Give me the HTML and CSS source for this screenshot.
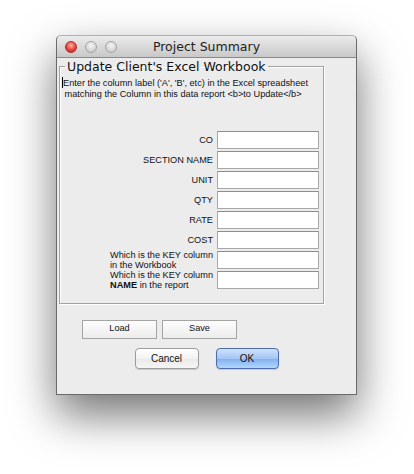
FILE: index.html
```html
<!DOCTYPE html>
<html lang="en">
  <head>
    <meta charset="UTF-8" />
    <meta name="viewport" content="width=device-width, initial-scale=1.0" />
    <title>Project Summary</title>
    <link rel="stylesheet" href="styles.css">
  </head>
  <body>
    <div class="window">
      <div class="titlebar">
        <div class="lights">
          <span class="light red"></span>
          <span class="light"></span>
          <span class="light"></span>
        </div>
        <div class="title">Project Summary</div>
        <div></div>
      </div>

      <div class="content">
        <fieldset class="group">
          <legend>Update Client's Excel Workbook</legend>
          <p class="intro"><span class="caret"></span>Enter the column label ('A', 'B', etc) in the Excel spreadsheet<br> matching the Column in this data report &lt;b&gt;to Update&lt;/b&gt;</p>

          <div class="fields">
            <label>CO</label><input type="text">
            <label>SECTION NAME</label><input type="text">
            <label>UNIT</label><input type="text">
            <label>QTY</label><input type="text">
            <label>RATE</label><input type="text">
            <label>COST</label><input type="text">
            <label class="multi">Which is the KEY column<br>in the Workbook</label><input type="text">
            <label class="multi">Which is the KEY column<br><b>NAME</b> in the report</label><input type="text">
          </div>
        </fieldset>

        <div class="file-buttons">
          <button class="square">Load</button>
          <button class="square">Save</button>
        </div>

        <div class="dialog-buttons">
          <button class="push">Cancel</button>
          <button class="push primary">OK</button>
        </div>
      </div>
    </div>
  </body>
</html>
```

FILE: styles.css
```css
html {
  background-color: #fff;
}

body {
  margin: 0;
  min-height: 474px;
  padding-bottom: 1px;
  font-family: "Liberation Sans", Arial, sans-serif;
  color: #000;
}

.window {
  width: 301px;
  margin: 35px 0 0 56px;
  background-color: #ececec;
  border: 1px solid #6a6a6a;
  border-top-color: #b0b0b0;
  border-radius: 5px 5px 0 0;
  box-shadow: 0 20px 45px rgba(0, 0, 0, 0.55);
  box-sizing: border-box;
}

.titlebar {
  display: grid;
  grid-template-columns: 1fr auto 1fr;
  align-items: center;
  height: 21px;
  background: linear-gradient(#ebebeb, #c8c8c8);
  border-bottom: 1px solid #8a8a8a;
  border-radius: 5px 5px 0 0;
}

.lights {
  display: flex;
  gap: 8px;
  padding-left: 8px;
}

.light {
  width: 12px;
  height: 12px;
  border-radius: 50%;
  box-sizing: border-box;
  border: 1px solid #a3a3a3;
  background: radial-gradient(circle at 50% 35%, #f4f4f4, #d2d2d2 70%, #bdbdbd);
}

.light.red {
  border-color: #a8302e;
  background: radial-gradient(circle at 50% 35%, #ffb5a8, #e8413b 55%, #b8201c);
}

.title {
  font-family: "DejaVu Sans", sans-serif;
  font-size: 12.5px;
  color: #222;
}

.content {
  padding: 1px 0 25px 0;
}

.group {
  width: 265px;
  box-sizing: border-box;
  margin: 0 0 0 2px;
  padding: 0 4px 14px 2px;
  border: 1px solid #a2a2a2;
  box-shadow: 1px 1px 0 #fff, inset 1px 1px 0 #fff;
  min-width: 0;
}

.group legend {
  font-family: "DejaVu Sans", sans-serif;
  font-size: 12.5px;
  line-height: 15px;
  margin-left: 3px;
  padding: 0 2px;
  color: #111;
}

.intro {
  margin: 3px 0 0 0;
  font-size: 9.2px;
  line-height: 11px;
  white-space: pre;
  color: #111;
}

.caret {
  display: inline-block;
  width: 0;
  height: 11px;
  border-left: 1px solid #000;
  vertical-align: -2px;
}

.fields {
  display: grid;
  grid-template-columns: auto 102px;
  grid-auto-rows: 18px;
  justify-content: end;
  align-items: center;
  column-gap: 4px;
  row-gap: 2px;
  margin-top: 31px;
}

.fields label {
  justify-self: end;
  font-size: 9.2px;
  line-height: 10px;
  color: #111;
}

.fields label.multi {
  justify-self: start;
}

.fields input {
  height: 18px;
  margin: 0;
  padding: 0 3px;
  box-sizing: border-box;
  border: 1px solid #a8a8a8;
  border-top-color: #8e8e8e;
  background-color: #fff;
  font-size: 10px;
}

.file-buttons {
  display: flex;
  gap: 5px;
  margin: 16px 0 0 25px;
}

.square {
  width: 75px;
  height: 19px;
  padding: 0 0 3px 0;
  border: 1px solid #a4a4a4;
  background: linear-gradient(#fdfdfd, #ececec);
  font-family: "Liberation Sans", Arial, sans-serif;
  font-size: 9.2px;
  color: #111;
}

.dialog-buttons {
  display: flex;
  justify-content: center;
  gap: 17px;
  margin-top: 9px;
}

.push {
  width: 64px;
  height: 21px;
  padding: 0;
  border: 1px solid #9c9c9c;
  border-radius: 4px;
  background: linear-gradient(#ffffff, #f3f3f3 50%, #e9e9e9 51%, #f6f6f6);
  box-shadow: 0 1px 1px rgba(0, 0, 0, 0.15);
  font-family: "Liberation Sans", Arial, sans-serif;
  font-size: 10px;
  color: #111;
}

.push.primary {
  width: 63px;
  border-color: #4d6ca8;
  background: linear-gradient(#cfe1fb, #a4c6f4 50%, #7fb0f0 51%, #b3d6fb);
}
```
